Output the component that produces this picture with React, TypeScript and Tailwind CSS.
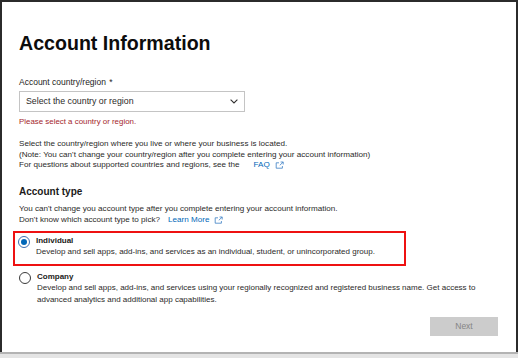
function ExternalIcon() {
  return (
    <svg width="9" height="8" viewBox="0 0 9 8" fill="none" stroke="#3b7fc4" strokeWidth="0.8" className="ml-[5px] inline-block">
      <path d="M4 1.8H1.2v5.4h6.2V5" />
      <path d="M5.6 1h2.6v2.5M8.1 1.1L4.8 4.3" />
    </svg>
  )
}

function Radio({ checked }: { checked?: boolean }) {
  return (
    <span
      className={
        'flex h-[12px] w-[12px] shrink-0 items-center justify-center rounded-full border bg-white ' +
        (checked ? 'border-[#3c6fb0]' : 'border-[#3a3a3a]')
      }
    >
      {checked && <span className="h-[6px] w-[6px] rounded-full bg-[#0067b8]" />}
    </span>
  )
}

export default function App() {
  return (
    <div className="flex h-[358px] w-[518px] flex-col bg-white font-['Liberation_Sans',Arial,sans-serif] text-[#2b2a29]">
      {/* Page */}
      <div className="flex-1 border-2 border-b-0 border-[#2b2b2b] pl-[17px] pr-[18px] pt-[29px]">
        <h1 className="h-[24px] text-[19.6px] font-bold leading-[24px] text-[#0c0c0c]">Account Information</h1>

        <div className="mt-[21px] text-[8.5px] leading-[12px] text-[#252423]">
          Account country/region <span className="ml-[1px]">*</span>
        </div>
        <button className="mt-[3px] flex h-[21px] w-[226px] items-center justify-between border border-[#c4c4c4] bg-white pl-[6px] pr-[6px] text-left text-[8.8px] text-[#2b2a29]">
          <span>Select the country or region</span>
          <svg width="8" height="5" viewBox="0 0 8 5" fill="none" stroke="#323130" strokeWidth="1.1">
            <path d="M0.6 0.6L4 4L7.4 0.6" />
          </svg>
        </button>
        <div className="mt-[4px] text-[7.9px] leading-[12px] text-[#a4262c]">Please select a country or region.</div>

        <div className="mt-[11px] text-[8.1px] leading-[10.5px]">
          <p>Select the country/region where you live or where your business is located.</p>
          <p>(Note: You can't change your country/region after you complete entering your account information)</p>
          <p className="flex items-center">
            For questions about supported countries and regions, see the
            <a className="ml-[14px] text-[#0067b8]">FAQ</a>
            <ExternalIcon />
          </p>
        </div>

        <h2 className="mt-[14px] text-[10px] font-bold leading-[14px] text-[#1b1a19]">Account type</h2>
        <div className="mt-[5.5px] text-[8.1px] leading-[10.5px]">
          <p>You can't change you account type after you complete entering your account information.</p>
          <p className="flex items-center">
            Don't know which account type to pick?
            <a className="ml-[8px] text-[#0067b8]">Learn More</a>
            <ExternalIcon />
          </p>
        </div>

        {/* Individual (highlighted) */}
        <div className="-ml-[6px] mt-[6px] flex h-[35px] w-[393px] gap-[6px] border-2 border-[#ee1111] pl-[3px] pt-[2.5px]">
          <Radio checked />
          <div className="text-[8px] leading-[11px]">
            <div className="-mt-[0.5px] font-bold text-[#1b1a19]">Individual</div>
            <div>Develop and sell apps, add-ins, and services as an individual, student, or unincorporated group.</div>
          </div>
        </div>

        {/* Company */}
        <div className="mt-[5.5px] flex gap-[6px]">
          <Radio />
          <div className="text-[8px] leading-[11px]">
            <div className="-mt-[0.5px] font-bold text-[#1b1a19]">Company</div>
            <div className="leading-[11.5px]">
              Develop and sell apps, add-ins, and services using your regionally recognized and registered business name. Get access to
              <br />
              advanced analytics and additional app capabilities.
            </div>
          </div>
        </div>

        <div className="mt-[12px] flex justify-end">
          <button className="h-[19px] w-[68px] bg-[#cccccc] text-[8.5px] text-[#858585]">Next</button>
        </div>
      </div>
      {/* bottom edge */}
      <div className="h-[6px] border-t-2 border-[#b3b3b3] bg-[#e4e4e4]" />
    </div>
  )
}
